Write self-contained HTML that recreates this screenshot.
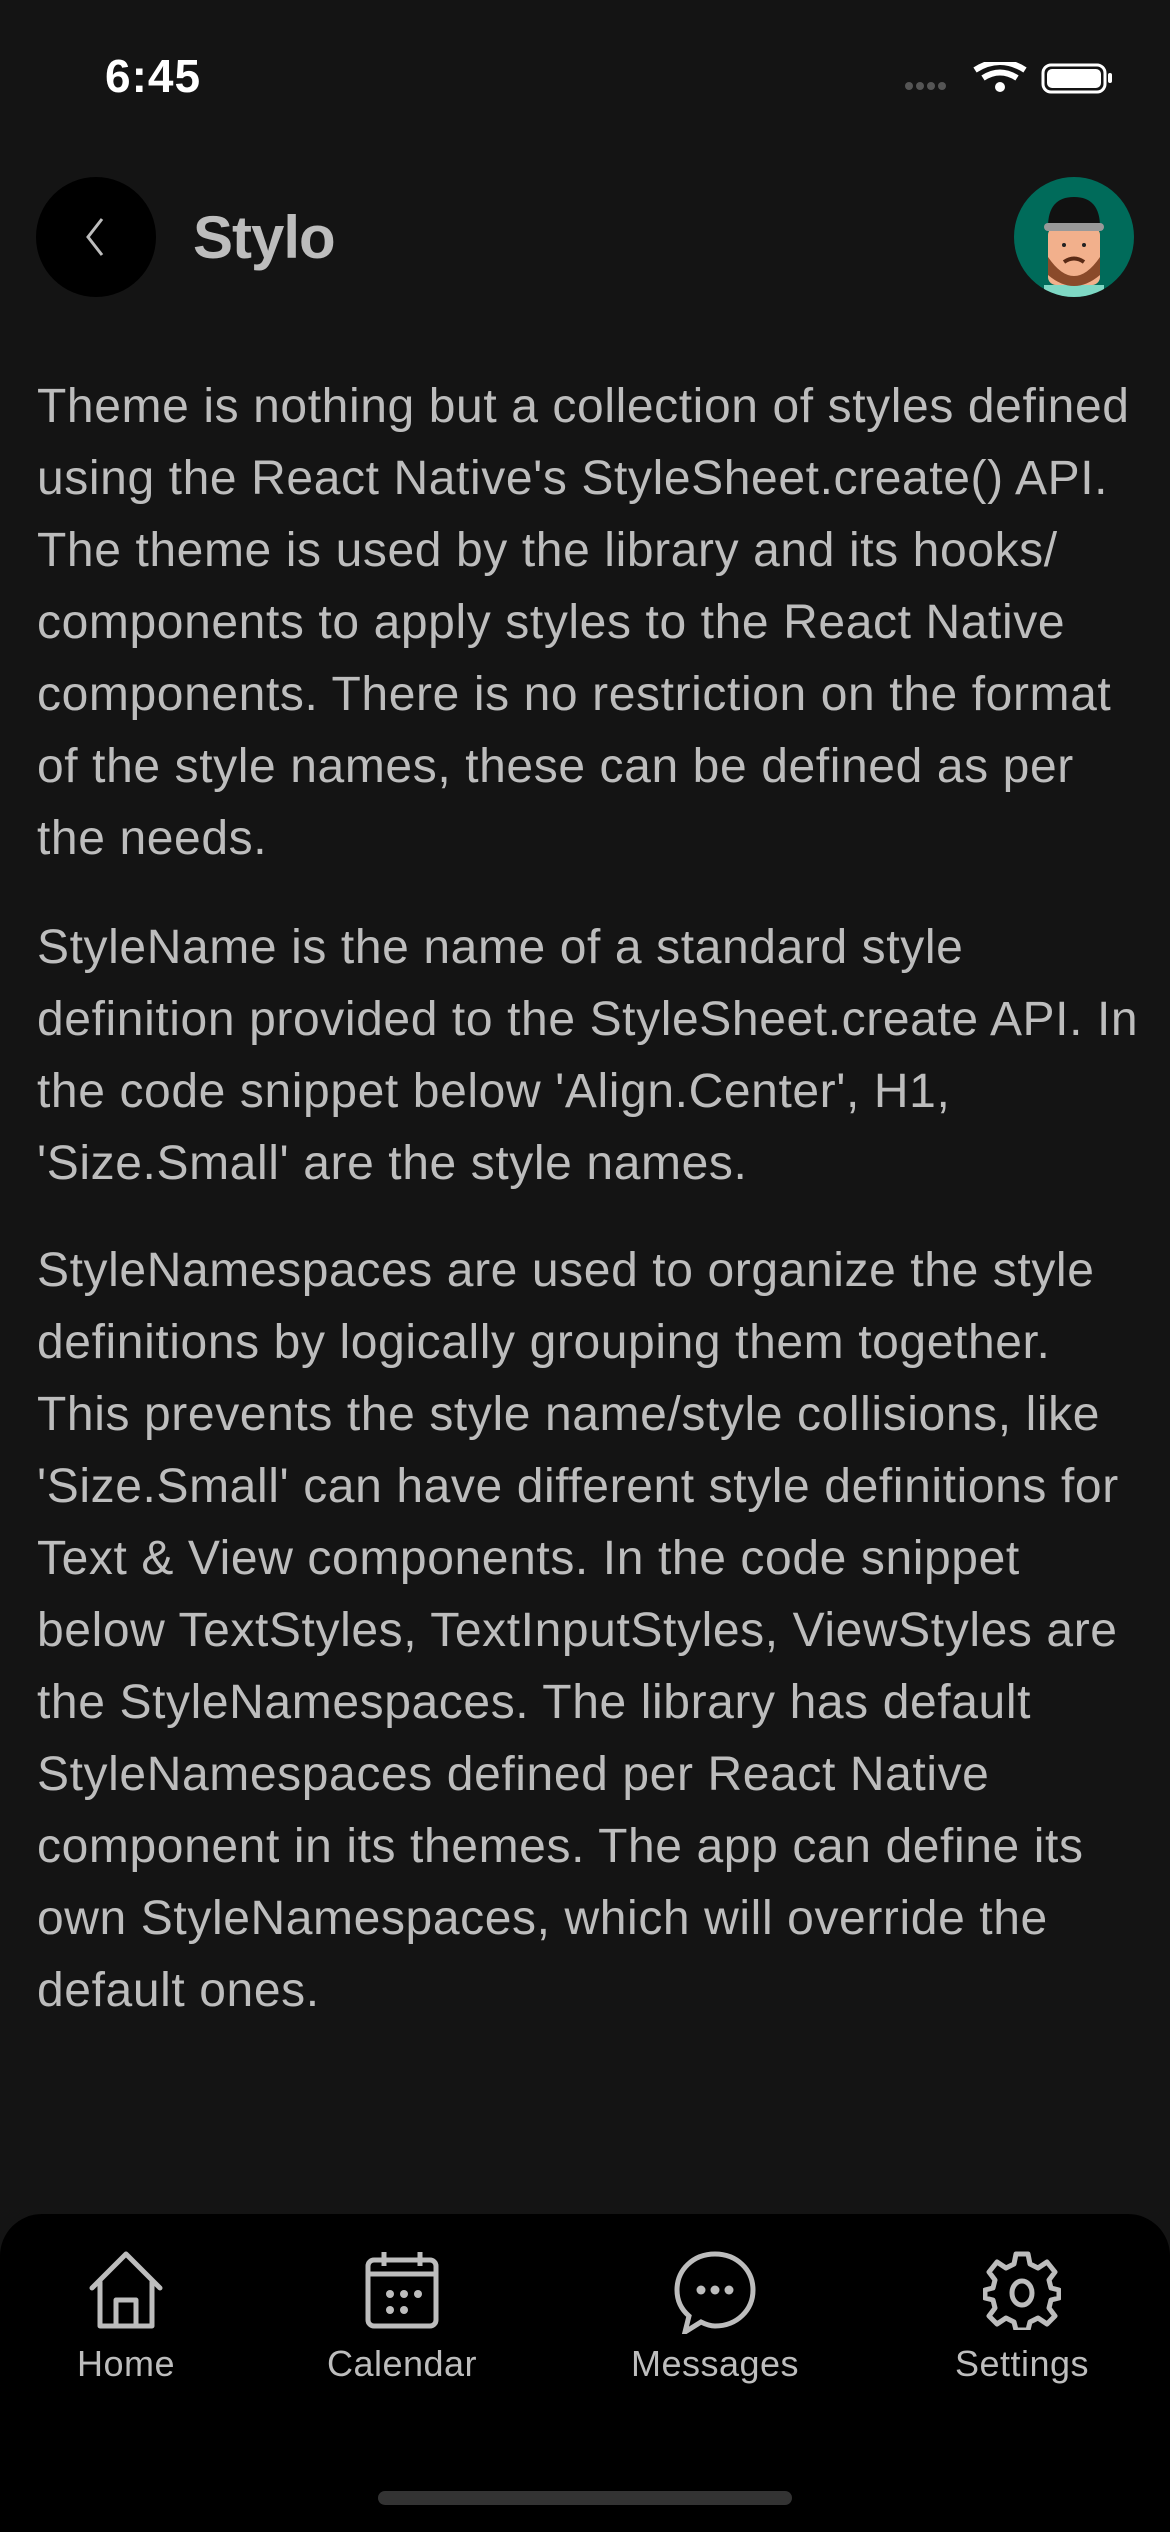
<!DOCTYPE html>
<html><head><meta charset="utf-8"><style>
*{margin:0;padding:0;box-sizing:border-box}
html,body{width:1170px;height:2532px;background:#141414;overflow:hidden;font-family:"Liberation Sans",sans-serif}
.time{position:absolute;left:105px;top:49px;font-size:46px;font-weight:bold;color:#fff;letter-spacing:1px}
.back{position:absolute;left:36px;top:177px;width:120px;height:120px;border-radius:50%;background:#000}
.title{position:absolute;left:193px;top:203px;font-size:60px;font-weight:bold;color:#bdbdbd;letter-spacing:-1px}
.avatar{position:absolute;left:1014px;top:177px;width:120px;height:120px;border-radius:50%;background:#006b5a;overflow:hidden}
.txt{position:absolute;left:37px;width:1130px;color:#bdbdbd;font-size:48px;line-height:72px;white-space:nowrap;letter-spacing:0.6px}
.tab{position:absolute;left:0;top:2214px;width:1170px;height:318px;background:#000;border-radius:42px 42px 0 0}
.lbl{position:absolute;top:2343px;font-size:36px;color:#bdbdbd;transform:translateX(-50%);letter-spacing:0.5px}
.ic{position:absolute;top:2250px}
.bar{position:absolute;left:378px;top:2491px;width:414px;height:14px;border-radius:7px;background:#333}
</style></head><body>
<div class="time">6:45</div>
<svg style="position:absolute;left:905px;top:62px" width="210" height="32" viewBox="0 0 210 32">
<g fill="#555"><circle cx="4" cy="24" r="4"/><circle cx="15" cy="24" r="4"/><circle cx="26" cy="24" r="4"/><circle cx="37" cy="24" r="4"/></g>
<path d="M70 8 Q95 -8 120 8" stroke="#fff" stroke-width="6" fill="none"/>
<path d="M78 16 Q95 5 112 16" stroke="#fff" stroke-width="6" fill="none"/>
<circle cx="95" cy="25" r="5" fill="#fff"/>
<rect x="138" y="3" width="62" height="27" rx="8" fill="none" stroke="#fff" stroke-width="3"/>
<rect x="142" y="7" width="54" height="19" rx="5" fill="#fff"/>
<rect x="203" y="11" width="4" height="10" rx="2" fill="#fff"/>
</svg>
<div class="back"><svg width="120" height="120"><path d="M66 42 L52 60 L66 78" stroke="#bdbdbd" stroke-width="3" fill="none"/></svg></div>
<div class="title">Stylo</div>
<div class="avatar"><svg width="120" height="120">
<rect x="30" y="108" width="60" height="20" fill="#7fd8c4"/>
<rect x="34" y="50" width="52" height="58" rx="8" fill="#f2b08c"/>
<path d="M34 80 Q60 118 86 80 L86 98 Q60 120 34 98Z" fill="#8a4a2a"/>
<path d="M50 85 Q60 78 70 85" stroke="#5a2a15" stroke-width="4" fill="none"/>
<path d="M34 50 Q34 20 60 20 Q86 20 86 50Z" fill="#111"/>
<rect x="30" y="46" width="60" height="8" rx="4" fill="#999"/>
<circle cx="50" cy="68" r="2" fill="#222"/><circle cx="70" cy="68" r="2" fill="#222"/>
</svg></div>
<div class="txt" style="top:371px">Theme is nothing but a collection of styles defined<br>using the React Native's StyleSheet.create() API.<br>The theme is used by the library and its hooks/<br>components to apply styles to the React Native<br>components. There is no restriction on the format<br>of the style names, these can be defined as per<br>the needs.</div>
<div class="txt" style="top:912px">StyleName is the name of a standard style<br>definition provided to the StyleSheet.create API. In<br>the code snippet below 'Align.Center', H1,<br>'Size.Small' are the style names.</div>
<div class="txt" style="top:1235px">StyleNamespaces are used to organize the style<br>definitions by logically grouping them together.<br>This prevents the style name/style collisions, like<br>'Size.Small' can have different style definitions for<br>Text &amp; View components. In the code snippet<br>below TextStyles, TextInputStyles, ViewStyles are<br>the StyleNamespaces. The library has default<br>StyleNamespaces defined per React Native<br>component in its themes. The app can define its<br>own StyleNamespaces, which will override the<br>default ones.</div>
<div class="tab"></div>
<svg class="ic" style="left:88px" width="76" height="80" viewBox="0 0 76 80"><g stroke="#bdbdbd" stroke-width="5" fill="none" stroke-linejoin="round" stroke-linecap="round"><path d="M4 38 L38 4 L72 38"/><path d="M12 32 V76 H64 V32"/><path d="M28 76 V50 H48 V76"/></g></svg>
<svg class="ic" style="left:364px" width="76" height="80" viewBox="0 0 76 80"><g stroke="#bdbdbd" stroke-width="5" fill="none"><rect x="4" y="10" width="68" height="66" rx="6"/><path d="M4 24 H72 M20 2 V16 M56 2 V16"/></g><g fill="#bdbdbd"><circle cx="26" cy="44" r="4"/><circle cx="40" cy="44" r="4"/><circle cx="54" cy="44" r="4"/><circle cx="26" cy="60" r="4"/><circle cx="40" cy="60" r="4"/></g></svg>
<svg class="ic" style="left:673px" width="84" height="84" viewBox="0 0 84 84"><path d="M42 4 C20 4 4 20 4 40 C4 52 9 60 16 66 L12 82 L28 72 C32 74 37 76 42 76 C64 76 80 60 80 40 C80 20 64 4 42 4Z" stroke="#bdbdbd" stroke-width="5" fill="none"/><g fill="#bdbdbd"><circle cx="28" cy="40" r="4.5"/><circle cx="42" cy="40" r="4.5"/><circle cx="56" cy="40" r="4.5"/></g></svg>
<svg class="ic" style="left:983px" width="78" height="80" viewBox="0 0 78 80"><path d="M33 4 H45 L47 14 L55 18 L64 12 L72 22 L66 30 L68 38 L76 40 V48 L68 50 L66 58 L72 66 L64 74 L55 68 L47 72 L45 80 H33 L31 72 L23 68 L14 74 L6 66 L12 58 L10 50 L2 48 V40 L10 38 L12 30 L6 22 L14 12 L23 18 L31 14Z" stroke="#bdbdbd" stroke-width="5" fill="none" stroke-linejoin="round"/><ellipse cx="39" cy="43" rx="10" ry="12" stroke="#bdbdbd" stroke-width="5" fill="none"/></svg>
<div class="lbl" style="left:126px">Home</div>
<div class="lbl" style="left:402px">Calendar</div>
<div class="lbl" style="left:715px">Messages</div>
<div class="lbl" style="left:1022px">Settings</div>
<div class="bar"></div>
</body></html>
